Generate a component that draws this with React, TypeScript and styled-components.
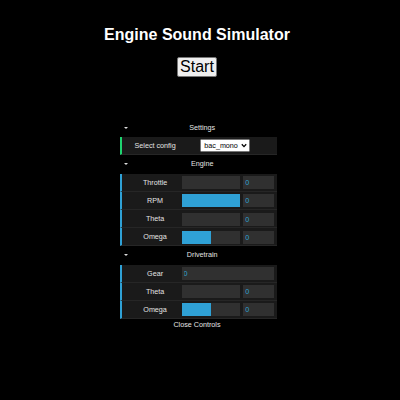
import React from "react";
import styled, { createGlobalStyle } from "styled-components";

const GlobalStyle = createGlobalStyle`
  html, body { margin: 0; padding: 0; background: #000; }
  body { font-family: "Liberation Sans", Arial, sans-serif; }
`;

const Page = styled.div`
  display: flex;
  flex-direction: column;
  align-items: center;
  padding-right: 6px;
  min-height: 400px;
  box-sizing: border-box;
`;

const Heading = styled.h1`
  margin: 26px 0 0;
  font-size: 16px;
  line-height: 18px;
  font-weight: bold;
  color: #fff;
`;

const StartButton = styled.button`
  margin-top: 13px;
  font-family: "Liberation Sans", Arial, sans-serif;
  font-size: 16px;
  line-height: 18px;
  padding: 0 2px;
  background: #efefef;
  color: #000;
  border: 1px solid #767676;
  border-radius: 2px;
`;

const Panel = styled.div`
  margin-top: 42px;
  width: 159px;
  font: 7.2px "Liberation Sans", Arial, sans-serif;
  color: #e4e4e4;
`;

const Folder = styled.div`
  padding-left: 2.6px;
`;

const Title = styled.div`
  position: relative;
  height: 18.2px;
  line-height: 18.2px;
  padding-left: 10.4px;
  padding-right: 2.6px;
  text-align: center;
  background: #000;
`;

const Triangle = styled.span`
  position: absolute;
  left: 3.5px;
  top: 8px;
  width: 0;
  height: 0;
  border-left: 2px solid transparent;
  border-right: 2px solid transparent;
  border-top: 2.6px solid #ddd;
`;

const Row = styled.div<{ $accent: string }>`
  display: flex;
  height: 17.2px;
  line-height: 17.6px;
  padding: 0 2.6px 0 3.3px;
  background: #1a1a1a;
  border-bottom: 1px solid #262626;
  border-left: 2px solid ${(p) => p.$accent};
`;

const Name = styled.div`
  width: 40%;
  text-align: center;
  overflow: hidden;
  white-space: nowrap;
`;

const Control = styled.div`
  width: 60%;
  display: flex;
  justify-content: space-between;
  align-items: flex-start;
`;

const Slider = styled.div`
  width: 66%;
  margin-left: -3.3px;
  margin-top: 2.6px;
  height: 13px;
  background: #303030;
`;

const SliderFill = styled.div`
  height: 100%;
  background: #2fa1d6;
`;

const NumberBox = styled.input<{ $full?: boolean }>`
  box-sizing: content-box;
  width: ${(p) => (p.$full ? "100%" : "30%")};
  margin: 2.6px 0 0 ${(p) => (p.$full ? "-3.3px" : "0")};
  padding: 2px;
  height: 9px;
  border: 0;
  outline: none;
  background: #303030;
  color: #2fa1d6;
  font: 7.2px "Liberation Sans", Arial, sans-serif;
`;

const SelectBox = styled.div`
  display: inline-flex;
  align-items: center;
  gap: 3px;
  margin: 2px 0 0 15.5px;
  height: 11px;
  padding: 0 2px 0 3px;
  font: 7.2px "Liberation Sans", Arial, sans-serif;
  line-height: 11px;
  color: #000;
  background: #fff;
  border: 1px solid #767676;
  border-radius: 1.5px;
`;

const CloseButton = styled.div`
  height: 13px;
  line-height: 12.4px;
  text-align: center;
  background: #000;
`;

type NumRow = { name: string; fill?: number; full?: boolean };

const NumberRow = ({ name, fill, full }: NumRow) => (
  <Row $accent="#2fa1d6">
    <Name>{name}</Name>
    <Control>
      {full ? (
        <NumberBox $full readOnly value="0" />
      ) : (
        <>
          <Slider>
            <SliderFill style={{ width: `${fill ?? 0}%` }} />
          </Slider>
          <NumberBox readOnly value="0" />
        </>
      )}
    </Control>
  </Row>
);

const FolderTitle = ({ children }: { children: React.ReactNode }) => (
  <Title>
    <Triangle />
    {children}
  </Title>
);

export default function App() {
  return (
    <>
      <GlobalStyle />
      <Page>
        <Heading>Engine Sound Simulator</Heading>
        <StartButton>Start</StartButton>
        <Panel>
          <Folder>
            <FolderTitle>Settings</FolderTitle>
            <Row $accent="#1ed36f">
              <Name>Select config</Name>
              <Control>
                <SelectBox>
                  bac_mono
                  <svg width="6" height="5" viewBox="0 0 6 5">
                    <path d="M0.8 1.2 L3 3.6 L5.2 1.2" fill="none" stroke="#000" strokeWidth="1.3" />
                  </svg>
                </SelectBox>
              </Control>
            </Row>
          </Folder>
          <Folder>
            <FolderTitle>Engine</FolderTitle>
            <NumberRow name="Throttle" fill={0} />
            <NumberRow name="RPM" fill={100} />
            <NumberRow name="Theta" fill={0} />
            <NumberRow name="Omega" fill={50} />
          </Folder>
          <Folder>
            <FolderTitle>Drivetrain</FolderTitle>
            <NumberRow name="Gear" full />
            <NumberRow name="Theta" fill={0} />
            <NumberRow name="Omega" fill={50} />
          </Folder>
          <CloseButton>Close Controls</CloseButton>
        </Panel>
      </Page>
    </>
  );
}
